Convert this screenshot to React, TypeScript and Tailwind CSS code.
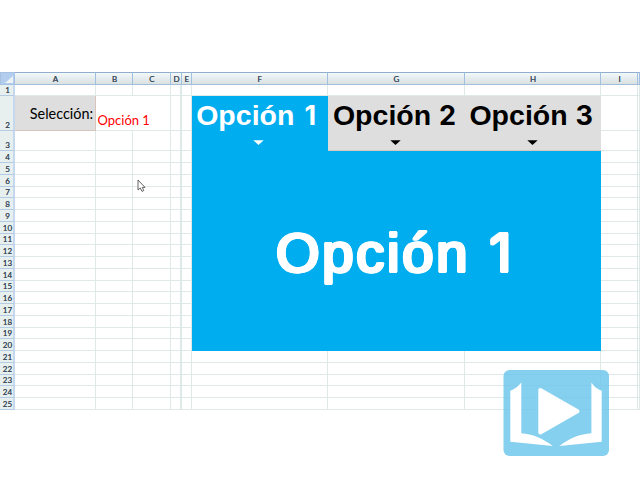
import React from "react";

const columns = [
  { name: "A", cls: "col-start-2" },
  { name: "B", cls: "col-start-3" },
  { name: "C", cls: "col-start-4" },
  { name: "D", cls: "col-start-5" },
  { name: "E", cls: "col-start-6" },
  { name: "F", cls: "col-start-7" },
  { name: "G", cls: "col-start-8" },
  { name: "H", cls: "col-start-9" },
  { name: "I", cls: "col-start-10" },
  { name: "", cls: "col-start-11" },
];

const rows = Array.from({ length: 25 }, (_, i) => i + 1);

function Row({ n }: { n: number }) {
  return (
    <>
      <div
        className="col-start-1 flex items-end justify-center border-r-2 border-b border-r-[#c5d8ee] border-b-[#b4cbe4] bg-[#e7efef] pl-[2px] text-[8px] leading-[9px] text-[#3c4c5c] [text-shadow:0_0_0.6px_#3c4c5c]"
        style={{ gridRowStart: n + 1 }}
      >
        {n}
      </div>
      {columns.map((c) => (
        <div
          key={c.cls}
          className={`${c.cls} ${c.name === "D" ? "border-r-2" : "border-r"} border-b border-[#dfe9e7]`}
          style={{ gridRowStart: n + 1 }}
        />
      ))}
    </>
  );
}

function Tab({ digit, place, active }: { digit: number; place: string; active?: boolean }) {
  return (
    <div
      className={`${place} row-start-3 row-span-2 flex flex-col items-center ${
        active
          ? "bg-[#00adef] text-white"
          : "border-b border-[#d3c8c0] bg-[#dedede] text-black"
      }`}
    >
      <span className="mt-[3px] -ml-[5px] h-8 font-['Liberation_Sans',sans-serif] text-[28.5px] leading-8 font-bold whitespace-nowrap">
        Opción{" "}
        <span className="inline-block w-[16px] text-center font-['Inter',sans-serif] text-[27px] leading-8 font-bold">
          {digit}
        </span>
      </span>
      <svg className="mt-[9px] -ml-[2px] h-[5px] w-[11px]" viewBox="0 0 11 5">
        <path d="M0.3 0.2H10.7L5.5 5Z" fill="currentColor" />
      </svg>
    </div>
  );
}

export default function App() {
  return (
    <main className="relative h-[480px] w-[640px] overflow-hidden bg-white pt-[72px] font-['Lato','Open_Sans',sans-serif]">
      <div className="grid h-[338px] grid-cols-[15px_81px_37px_38px_11px_9.5px_136.5px_137px_136px_37px_2px] grid-rows-[13px_11.3px_34.7px_20.5px_repeat(22,11.75px)]">
        <div className="col-start-1 row-start-1 flex items-end justify-end border border-[#a5c2e2] bg-[#b3cdee] p-[1px]">
          <svg className="h-[7px] w-[8px]" viewBox="0 0 8 7">
            <path d="M8 0V7H0Z" fill="#edf2f5" />
          </svg>
        </div>
        {columns.map((c) => (
          <div
            key={c.cls}
            className={`${c.cls} row-start-1 flex items-center justify-center border-t border-r border-b border-t-[#91add0] border-r-[#9fc0e0] border-b-[#a3bed7] bg-linear-to-b from-[#f3f8f8] to-[#d9e1e3] pt-px pl-px text-[8px] leading-none text-[#3c4c5c] [text-shadow:0_0_0.6px_#3c4c5c]`}
          >
            {c.name}
          </div>
        ))}
        {rows.map((n) => (
          <Row key={n} n={n} />
        ))}

        <div className="col-start-2 row-start-3 flex items-center justify-end border-r border-b border-[#d8c4bd] bg-[#dedede] pr-[2px] text-[15.5px] text-black">
          <span className="origin-right scale-x-[0.93] pt-px">Selección:</span>
        </div>
        <div className="col-start-3 col-span-2 row-start-3 mr-px mb-px flex items-end bg-white pb-px pl-[1.5px] text-[13px] leading-[18px] text-[#f00]">
          <span>Opción 1</span>
        </div>

        <Tab digit={1} place="col-start-7" active />
        <Tab digit={2} place="col-start-8" />
        <Tab digit={3} place="col-start-9" />

        <section className="col-start-7 col-span-3 row-start-5 row-[span_17/span_17] flex items-center justify-center bg-[#00adef] pt-[3px]">
          <h1 className="font-['Liberation_Sans',sans-serif] text-[56px] leading-[64px] tracking-[2.8px] whitespace-nowrap text-white [text-shadow:1.7px_0_#fff,-1.7px_0_#fff,0_1.3px_#fff,0_-1.3px_#fff,1.2px_1px_#fff,-1.2px_1px_#fff,1.2px_-1px_#fff,-1.2px_-1px_#fff]">
            Opción{" "}
            <span className="-ml-[4px] inline-block w-[32px] text-center font-['Inter',sans-serif] text-[54px] leading-[64px] tracking-normal">
              1
            </span>
          </h1>
        </section>
      </div>

      <svg className="absolute top-[179px] left-[137px] h-[14px] w-[9px]" viewBox="0 0 9 14">
        <path
          d="M1 1V11L3.2 9L5 12.4L6.8 11.5L5.2 8.4H8Z"
          fill="white"
          stroke="#555"
          strokeWidth="0.9"
        />
      </svg>

      <svg className="absolute top-[369px] left-[503px] h-[88px] w-[107px]" viewBox="0 0 107 88">
        <rect x="0.5" y="1" width="105.5" height="86" rx="6" fill="#71c7ec" fillOpacity="0.86" />
        <g fill="white">
          <path d="M18.3 13.5V64.3C29 65 40 69.5 49.8 77L7.3 72.7V21.7C12 20 15 17.5 18.3 13.5Z" />
          <path d="M88.4 13.5V64.3C77 65 66 69.5 56.5 77L98.7 72.7V21.7C94 20 91 17.5 88.4 13.5Z" />
          <path
            d="M37.3 21V63.5L74.5 42.3Z"
            stroke="white"
            strokeWidth="4"
            strokeLinejoin="round"
          />
        </g>
      </svg>
    </main>
  );
}
